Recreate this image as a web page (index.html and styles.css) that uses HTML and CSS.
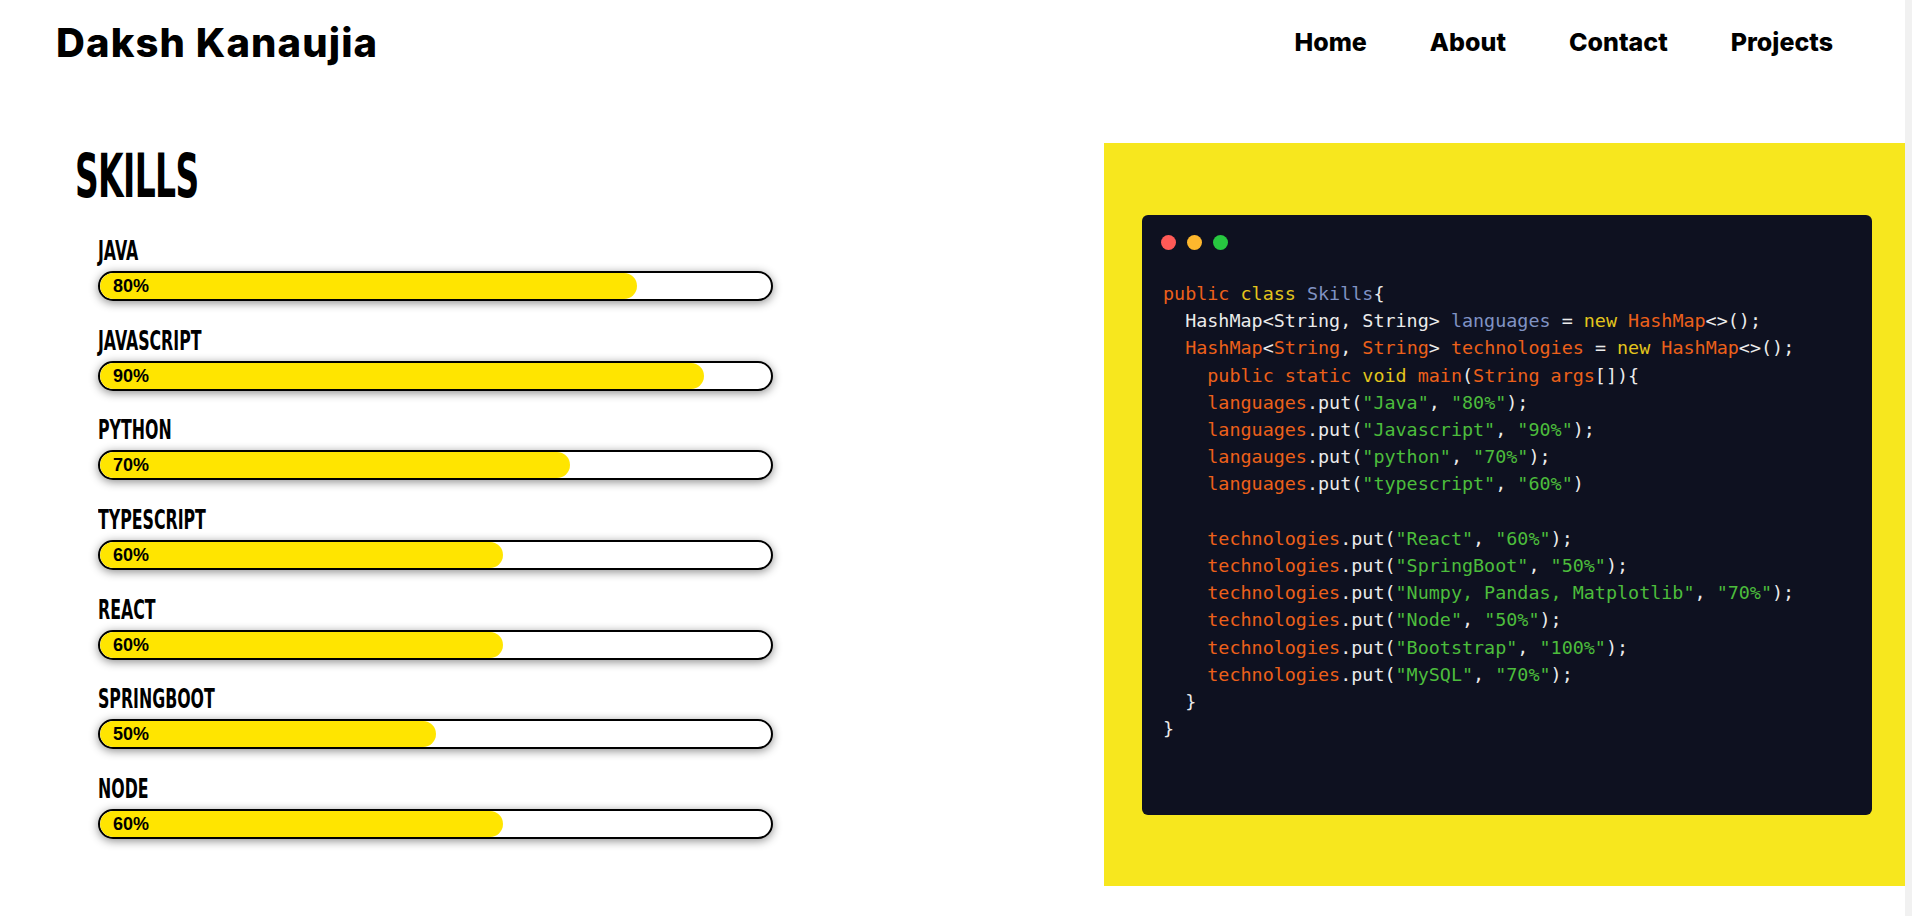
FILE: index.html
```html
<!DOCTYPE html>
<html lang="en">
<head>
<meta charset="utf-8">
<title>Daksh Kanaujia - Skills</title>
<link rel="stylesheet" href="styles.css">
</head>
<body>
<header class="header">
  <div class="brand">Daksh Kanaujia</div>
  <nav class="nav">
    <a href="#" class="nav-link">Home</a>
    <a href="#" class="nav-link">About</a>
    <a href="#" class="nav-link">Contact</a>
    <a href="#" class="nav-link">Projects</a>
  </nav>
</header>

<main class="skills-section">
  <div class="skills-left">
    <h1 class="skills-title">Skills</h1>
    <div class="skill-list">
      <div class="skill">
        <div class="skill-name">Java</div>
        <div class="bar"><div class="fill" style="width:80%"></div><span class="pct">80%</span></div>
      </div>
      <div class="skill">
        <div class="skill-name">Javascript</div>
        <div class="bar"><div class="fill" style="width:90%"></div><span class="pct">90%</span></div>
      </div>
      <div class="skill">
        <div class="skill-name">Python</div>
        <div class="bar"><div class="fill" style="width:70%"></div><span class="pct">70%</span></div>
      </div>
      <div class="skill">
        <div class="skill-name">Typescript</div>
        <div class="bar"><div class="fill" style="width:60%"></div><span class="pct">60%</span></div>
      </div>
      <div class="skill">
        <div class="skill-name">React</div>
        <div class="bar"><div class="fill" style="width:60%"></div><span class="pct">60%</span></div>
      </div>
      <div class="skill">
        <div class="skill-name">SpringBoot</div>
        <div class="bar"><div class="fill" style="width:50%"></div><span class="pct">50%</span></div>
      </div>
      <div class="skill">
        <div class="skill-name">Node</div>
        <div class="bar"><div class="fill" style="width:60%"></div><span class="pct">60%</span></div>
      </div>
    </div>
  </div>

  <div class="code-panel">
    <div class="code-window">
      <div class="dots">
        <span class="dot red"></span>
        <span class="dot orange"></span>
        <span class="dot green"></span>
      </div>
<pre class="code"><span class="o">public</span> <span class="y">class</span> <span class="b">Skills</span><span class="w">{</span>
  <span class="w">HashMap&lt;String, String&gt;</span> <span class="b">languages</span> <span class="w">=</span> <span class="y">new</span> <span class="o">HashMap</span><span class="w">&lt;&gt;();</span>
  <span class="o">HashMap</span><span class="w">&lt;</span><span class="o">String</span><span class="w">,</span> <span class="o">String</span><span class="w">&gt;</span> <span class="o">technologies</span> <span class="w">=</span> <span class="y">new</span> <span class="o">HashMap</span><span class="w">&lt;&gt;();</span>
    <span class="o">public static</span> <span class="y">void</span> <span class="o">main</span><span class="w">(</span><span class="o">String args</span><span class="w">[]){</span>
    <span class="o">languages</span><span class="w">.put(</span><span class="g">"Java"</span><span class="w">,</span> <span class="g">"80%"</span><span class="w">);</span>
    <span class="o">languages</span><span class="w">.put(</span><span class="g">"Javascript"</span><span class="w">,</span> <span class="g">"90%"</span><span class="w">);</span>
    <span class="o">langauges</span><span class="w">.put(</span><span class="g">"python"</span><span class="w">,</span> <span class="g">"70%"</span><span class="w">);</span>
    <span class="o">languages</span><span class="w">.put(</span><span class="g">"typescript"</span><span class="w">,</span> <span class="g">"60%"</span><span class="w">)</span>

    <span class="o">technologies</span><span class="w">.put(</span><span class="g">"React"</span><span class="w">,</span> <span class="g">"60%"</span><span class="w">);</span>
    <span class="o">technologies</span><span class="w">.put(</span><span class="g">"SpringBoot"</span><span class="w">,</span> <span class="g">"50%"</span><span class="w">);</span>
    <span class="o">technologies</span><span class="w">.put(</span><span class="g">"Numpy, Pandas, Matplotlib"</span><span class="w">,</span> <span class="g">"70%"</span><span class="w">);</span>
    <span class="o">technologies</span><span class="w">.put(</span><span class="g">"Node"</span><span class="w">,</span> <span class="g">"50%"</span><span class="w">);</span>
    <span class="o">technologies</span><span class="w">.put(</span><span class="g">"Bootstrap"</span><span class="w">,</span> <span class="g">"100%"</span><span class="w">);</span>
    <span class="o">technologies</span><span class="w">.put(</span><span class="g">"MySQL"</span><span class="w">,</span> <span class="g">"70%"</span><span class="w">);</span>
  <span class="w">}</span>
<span class="w">}</span></pre>
    </div>
  </div>
</main>

<section class="more-section"></section>
</body>
</html>
```

FILE: styles.css
```css
html {
  background: #f1f1f1;
}

body {
  margin: 0 7px 0 0;
  background: #ffffff;
  color: #000;
  font-family: "Liberation Sans", Arial, sans-serif;
}

.header {
  height: 84px;
  display: flex;
  align-items: center;
  justify-content: space-between;
  padding: 0 72px 0 56px;
}

.brand {
  font-family: Inter, "Noto Sans", sans-serif;
  font-weight: 800;
  font-size: 40px;
  letter-spacing: 1.1px;
}

.nav {
  display: flex;
  gap: 63px;
}

.nav-link {
  font-family: Inter, "Noto Sans", sans-serif;
  font-weight: 800;
  font-size: 25px;
  color: #000;
  text-decoration: none;
}

.skills-section {
  display: flex;
  margin-top: 59px;
}

.skills-left {
  flex: 1;
  padding-left: 75px;
}

.skills-title {
  margin: 3px 0 0;
  font-family: "Liberation Sans Narrow", "DejaVu Sans Condensed", "DejaVu Sans", sans-serif;
  font-stretch: condensed;
  font-weight: 700;
  font-size: 60px;
  line-height: 60px;
  text-transform: uppercase;
  letter-spacing: -1px;
  transform: scaleX(0.61);
  transform-origin: left center;
}

.skill-list {
  padding-left: 23px;
  margin-top: 31px;
}

.skill {
  margin-bottom: 25.7px;
}

.skill-name {
  font-family: "Liberation Sans Narrow", "DejaVu Sans Condensed", "DejaVu Sans", sans-serif;
  font-stretch: condensed;
  font-weight: 700;
  font-size: 27px;
  line-height: 28px;
  text-transform: uppercase;
  margin-bottom: 6px;
  transform: scaleX(0.65);
  transform-origin: left center;
}

.bar {
  position: relative;
  width: 671px;
  height: 26px;
  border: 2px solid #000;
  border-radius: 16px;
  background: #fff;
  overflow: hidden;
  box-shadow: 0 2px 10px rgba(0, 0, 0, 0.45);
}

.fill {
  height: 100%;
  background: #ffe500;
  border-radius: 14px;
}

.pct {
  position: absolute;
  left: 13px;
  top: 0;
  line-height: 26px;
  font-family: "Liberation Sans", Arial, sans-serif;
  font-weight: 700;
  font-size: 18px;
}

.code-panel {
  width: 801px;
  height: 743px;
  box-sizing: border-box;
  padding: 72px 33px 71px 38px;
  background: #f7e71e;
}

.code-window {
  height: 100%;
  box-sizing: border-box;
  background: #0e1120;
  border-radius: 6px;
  padding: 20px 19px;
}

.dots {
  display: flex;
  gap: 11px;
}

.dot {
  width: 15px;
  height: 15px;
  border-radius: 50%;
}
.dot.red { background: #ff5a57; }
.dot.orange { background: #fdb72d; }
.dot.green { background: #27c840; }

.code {
  margin: 30px 0 0 2px;
  font-family: "DejaVu Sans Mono", "Liberation Mono", monospace;
  font-size: 18.4px;
  line-height: 27.2px;
  color: #e8e8e8;
}

.o { color: #ec601a; }
.y { color: #e3c51c; }
.b { color: #8093c4; }
.w { color: #ebebeb; }
.g { color: #4cbd3c; }

.more-section {
  height: 2600px;
}
```
